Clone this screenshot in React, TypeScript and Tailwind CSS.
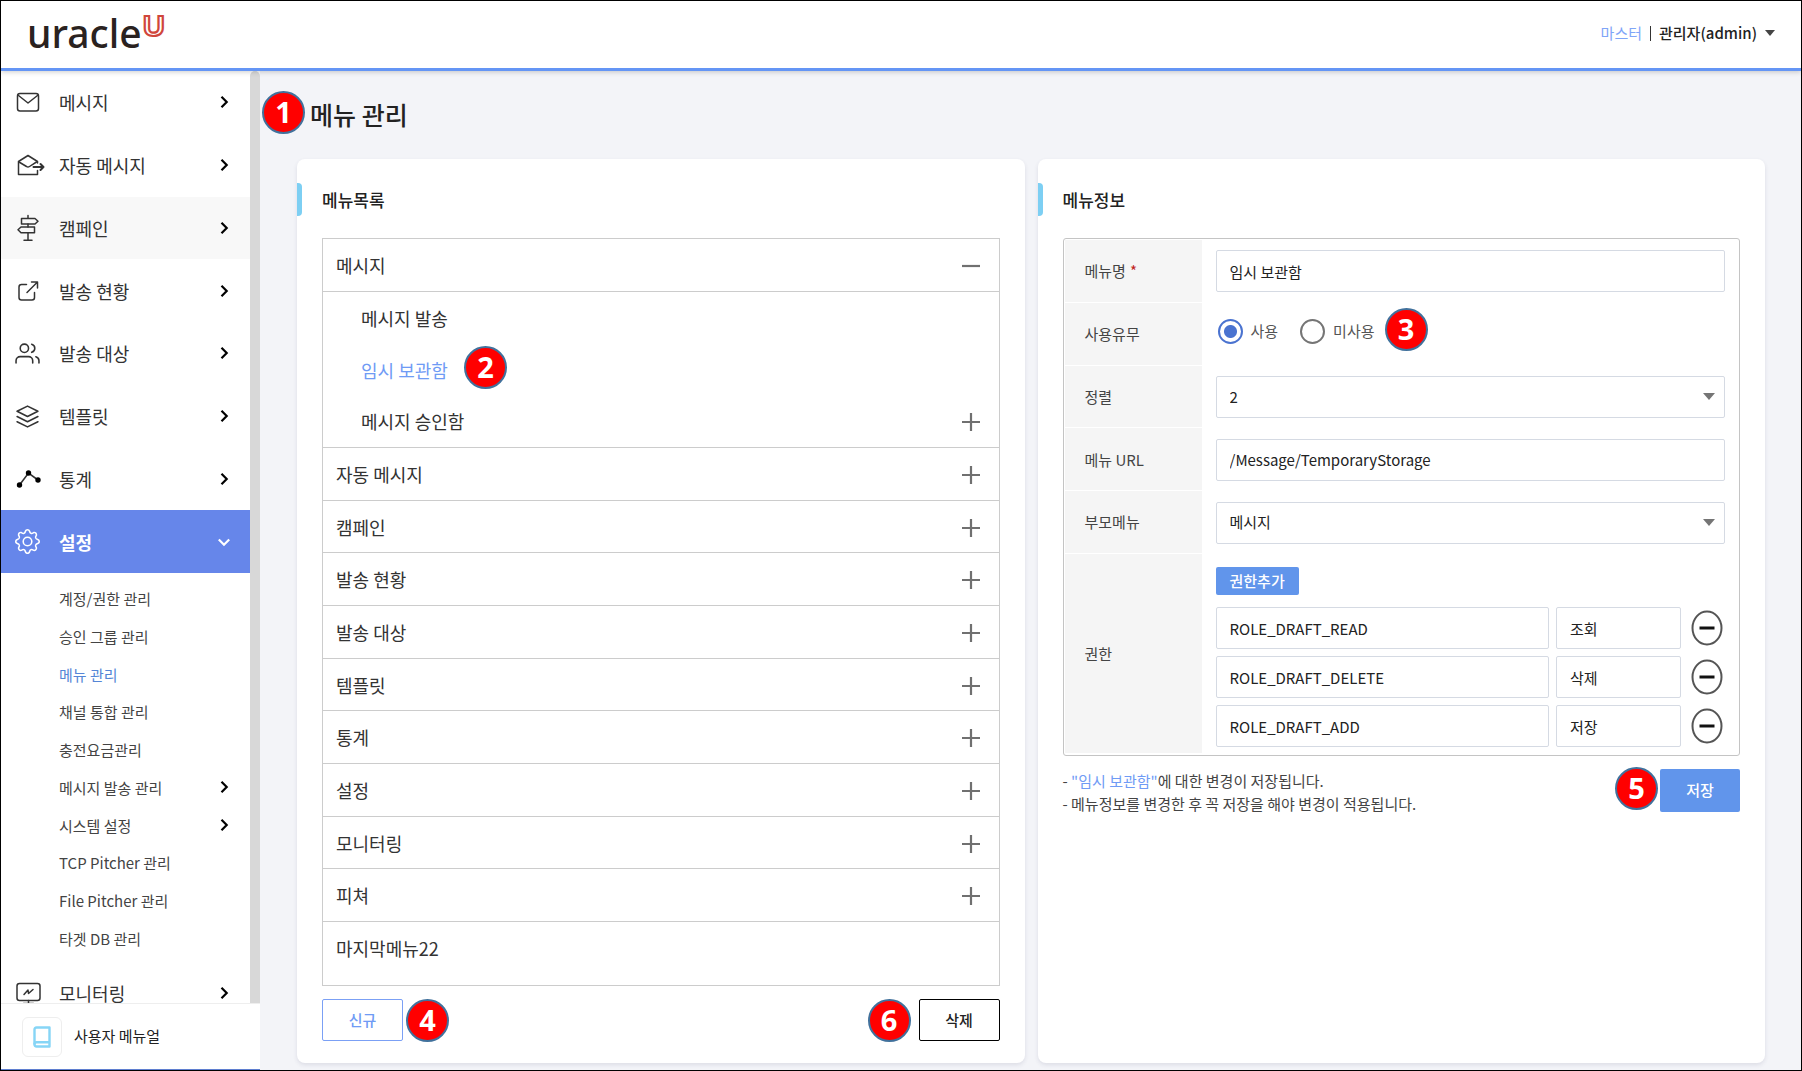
import { useState } from "react";
import type { ReactNode } from "react";
import { BsGear } from "react-icons/bs";
import { FiLayers, FiUsers } from "react-icons/fi";

interface NavItem {
  label: string;
  icon: ReactNode;
  hovered?: boolean;
}

interface SubItem {
  label: string;
  expandable?: boolean;
}

interface Role {
  name: string;
  label: string;
}

const stroke = {
  fill: "none",
  stroke: "currentColor",
  strokeWidth: 1.5,
  strokeLinecap: "round",
  strokeLinejoin: "round",
} as const;

const MailIcon = () => (
  <svg width="26" height="26" viewBox="0 0 26 26" {...stroke}>
    <rect x="2.500" y="4.500" width="21" height="17.500" rx="2.500" />
    <path d="M3.500 6.500 L13 14 L22.500 6.500" />
  </svg>
);

const AutoMailIcon = () => (
  <svg width="30" height="26" viewBox="0 0 30 26" {...stroke}>
    <path d="M22.500 11 V9.500 L13 3.500 L3.500 9.500 V22.500 H22.500 V18.500" />
    <path d="M4 10 L11.500 14.500 Q13 15.500 14.500 14.500 L21.500 10" />
    <path d="M18.500 15 H28.500 M25.500 12 L28.500 15 L25.500 18" strokeWidth="2" />
  </svg>
);

const SignpostIcon = () => (
  <svg width="26" height="28" viewBox="0 0 26 28" {...stroke}>
    <path d="M13 1.500 V4 M13 10 V13 M13 19 V26 M9 26.200 H17" />
    <path d="M6.500 4.500 H20 L23 7.200 L20 10 H6.500 Z" />
    <path d="M19.500 13 H6 L3 15.800 L6 18.800 H19.500 Z" />
  </svg>
);

const ShareIcon = () => (
  <svg width="26" height="26" viewBox="0 0 26 26" {...stroke}>
    <path d="M11.500 6.500 H6.500 Q4 6.500 4 9 V19.500 Q4 22 6.500 22 H17 Q19.500 22 19.500 19.500 V14.500" />
    <path d="M12 14.500 L22.500 4 M16.500 4 H22.500 V10" />
  </svg>
);

const ChartIcon = () => (
  <svg width="26" height="24" viewBox="0 0 26 24">
    <path
      d="M4.500 18 L13.500 6 L23 13"
      fill="none"
      stroke="#333"
      strokeWidth="1.6"
    />
    <circle cx="4.500" cy="18" r="2.700" />
    <circle cx="13.500" cy="6" r="2.700" />
    <circle cx="23" cy="13" r="2.700" />
  </svg>
);

const MonitorIcon = () => (
  <svg width="26" height="26" viewBox="0 0 26 26" {...stroke}>
    <rect x="2" y="3.500" width="23" height="17" rx="2.500" />
    <path d="M9 14.500 L13 10 L13.500 13.500 L18 9.500" />
    <path d="M13.500 20.500 V23 M8.500 23.500 H18.500" />
  </svg>
);

const BookIcon = () => (
  <svg
    width="18"
    height="22"
    viewBox="0 0 18 22"
    fill="none"
    stroke="#86d5f6"
    strokeWidth="2.400"
    strokeLinejoin="round"
  >
    <path d="M3.500 1.500 H16.500 V20.500 H3.500 Q1.500 20.500 1.500 18.500 V3.500 Q1.500 1.500 3.500 1.500 Z" />
    <path d="M1.500 18.500 Q1.500 16.200 3.500 16.200 H16.500" />
  </svg>
);

const Chevron = ({ open }: { open?: boolean }) => (
  <svg
    width="12"
    height="14"
    viewBox="0 0 12 14"
    fill="none"
    stroke="currentColor"
    strokeWidth="2.200"
    className={open ? "rotate-90" : ""}
  >
    <path d="M3.500 1.800 L8.700 7 L3.500 12.200" />
  </svg>
);

const Caret = () => (
  <svg width="12" height="7" viewBox="0 0 12 7" className="fill-[#757575]">
    <path d="M0 0 H12 L6 7 Z" />
  </svg>
);

const topItems: NavItem[] = [
  { label: "메시지", icon: <MailIcon /> },
  { label: "자동 메시지", icon: <AutoMailIcon /> },
  { label: "캠페인", icon: <SignpostIcon />, hovered: true },
  { label: "발송 현황", icon: <ShareIcon /> },
  { label: "발송 대상", icon: <FiUsers size={25} strokeWidth={1.5} /> },
  { label: "템플릿", icon: <FiLayers size={25} strokeWidth={1.5} /> },
  { label: "통계", icon: <ChartIcon /> },
];

const subItems: SubItem[] = [
  { label: "계정/권한 관리" },
  { label: "승인 그룹 관리" },
  { label: "메뉴 관리" },
  { label: "채널 통합 관리" },
  { label: "충전요금관리" },
  { label: "메시지 발송 관리", expandable: true },
  { label: "시스템 설정", expandable: true },
  { label: "TCP Pitcher 관리" },
  { label: "File Pitcher 관리" },
  { label: "타겟 DB 관리" },
];

const childMenus = ["메시지 발송", "임시 보관함", "메시지 승인함"];

const otherMenus = [
  "자동 메시지",
  "캠페인",
  "발송 현황",
  "발송 대상",
  "템플릿",
  "통계",
  "설정",
  "모니터링",
  "피쳐",
];

const initialRoles: Role[] = [
  { name: "ROLE_DRAFT_READ", label: "조회" },
  { name: "ROLE_DRAFT_DELETE", label: "삭제" },
  { name: "ROLE_DRAFT_ADD", label: "저장" },
];

const inputClass =
  "h-[42px] rounded-xs border border-[#d5dae3] bg-white px-[13px] text-[15px] text-[#222] outline-none";

// Numbered marker, placed by its parent
function Badge({ n, className }: { n: number; className: string }) {
  return (
    <span
      className={`absolute z-10 flex size-[43px] items-center justify-center rounded-full border-2 border-[#41719c] bg-[#ff0000] pb-[2px] font-['Open_Sans',sans-serif] text-[29px] leading-none font-bold text-white ${className}`}
    >
      {n}
    </span>
  );
}

function NavButton({
  item,
  active,
  className = "",
}: {
  item: NavItem;
  active?: boolean;
  className?: string;
}) {
  const tone = active
    ? "bg-[#6686ea] font-bold text-white"
    : item.hovered
      ? "bg-[#f8f8f8] text-[#333]"
      : "text-[#333]";
  return (
    <button
      className={`flex w-full items-center pr-5 pl-[14px] text-left text-lg leading-none ${tone} ${className}`}
    >
      <span className="flex w-[44px] shrink-0 items-center">{item.icon}</span>
      <span className="flex-1">{item.label}</span>
      <span className={active ? "text-white" : "text-black"}>
        <Chevron open={active} />
      </span>
    </button>
  );
}

function ToggleIcon({ open }: { open?: boolean }) {
  return (
    <svg width="18" height="20" viewBox="0 0 18 20" stroke="#707070" strokeWidth="2.200">
      <path d={open ? "M0 11 H18" : "M0 11 H18 M9 2 V20"} />
    </svg>
  );
}

function MenuRow({ label, open }: { label: string; open?: boolean }) {
  return (
    <button className="flex w-full flex-1 items-center justify-between border-b border-[#ccc] pr-[19px] pl-[13px] text-left text-lg leading-none text-[#333]">
      {label}
      <ToggleIcon open={open} />
    </button>
  );
}

function Card({ title, children }: { title: string; children: ReactNode }) {
  return (
    <section className="flex min-w-0 flex-1 flex-col rounded-lg bg-white pt-6 shadow-[0_2px_4px_rgba(60,60,100,0.12)]">
      <div className="flex h-[33px] items-center">
        <span className="h-full w-[5px] rounded-r-[4px] bg-[#7dcff3]" />
        <h2 className="pl-[20px] text-[17px] font-medium text-[#222]">{title}</h2>
      </div>
      <div className="flex flex-1 flex-col px-[25px] pt-[22px]">{children}</div>
    </section>
  );
}

function FormRow({
  label,
  htmlFor,
  required,
  children,
}: {
  label: string;
  htmlFor?: string;
  required?: boolean;
  children: ReactNode;
}) {
  return (
    <div className="flex flex-1">
      <label
        htmlFor={htmlFor}
        className="flex w-[137px] shrink-0 items-center border-b border-white bg-[#f5f5f5] pt-px pl-[20px] text-[15px] text-[#444]"
      >
        {label}
        {required && <span className="pl-1 text-[#c0241c]">*</span>}
      </label>
      <div className="flex flex-1 items-center pr-[13px] pl-[14px]">{children}</div>
    </div>
  );
}

function SelectBox({ id, options }: { id: string; options: string[] }) {
  return (
    <div className="relative w-full">
      <select id={id} className={`${inputClass} w-full appearance-none`}>
        {options.map((option) => (
          <option key={option}>{option}</option>
        ))}
      </select>
      <span className="pointer-events-none absolute inset-y-0 right-[10px] flex items-center">
        <Caret />
      </span>
    </div>
  );
}

function Radio({
  label,
  checked,
  onChange,
}: {
  label: string;
  checked: boolean;
  onChange: () => void;
}) {
  return (
    <label className="flex items-center gap-2 text-[15px] text-[#555]">
      <input
        type="radio"
        name="used"
        checked={checked}
        onChange={onChange}
        className="size-[25px] appearance-none rounded-full border-2 border-[#757575] checked:border-[#4a73d0] checked:bg-[radial-gradient(circle,#4a73d0_6px,transparent_7px)]"
      />
      {label}
    </label>
  );
}

function Sidebar() {
  return (
    <aside className="flex w-[259px] shrink-0 flex-col bg-white">
      <div className="flex min-h-0 flex-1">
        <nav className="min-w-0 flex-1 overflow-hidden">
          <div className="grid h-[502px] auto-rows-fr">
            {topItems.map((item) => (
              <NavButton key={item.label} item={item} />
            ))}
            <NavButton item={{ label: "설정", icon: <BsGear size={25} /> }} active />
          </div>
          <div className="grid h-[390px] auto-rows-fr pt-[7px] pb-[6px]">
            {subItems.map((sub) => (
              <a
                key={sub.label}
                href="#"
                className={`flex items-center justify-between pr-5 pl-[58px] text-[15px] leading-none ${
                  sub.label === "메뉴 관리" ? "text-[#5586d6]" : "text-[#444]"
                }`}
              >
                {sub.label}
                {sub.expandable && (
                  <span className="text-black">
                    <Chevron />
                  </span>
                )}
              </a>
            ))}
          </div>
          <NavButton
            item={{ label: "모니터링", icon: <MonitorIcon /> }}
            className="h-[60px]"
          />
        </nav>
        <div className="w-[10px] rounded-t-[5px] bg-[#d8d8d8]" />
      </div>
      <a
        href="#"
        className="flex h-[67px] shrink-0 items-center gap-3 border-t border-b border-t-[#eee] border-b-[#5f7fd0] pl-[21px] text-[15px] text-[#222]"
      >
        <span className="flex size-[40px] items-center justify-center rounded-md border border-[#eee]">
          <BookIcon />
        </span>
        사용자 메뉴얼
      </a>
    </aside>
  );
}

function MenuList() {
  const [selected, setSelected] = useState("임시 보관함");

  return (
    <Card title="메뉴목록">
      <div className="flex h-[748px] flex-col border border-[#ccc]">
        <div className="flex h-[53px]">
          <MenuRow label="메시지" open />
        </div>
        <div className="flex h-[156px] flex-col border-b border-[#ccc]">
          {childMenus.map((menu) => (
            <button
              key={menu}
              onClick={() => setSelected(menu)}
              className={`flex flex-1 items-center justify-between pr-[19px] pl-[38px] text-left text-lg leading-none ${
                menu === selected ? "text-[#6f9bf5]" : "text-[#333]"
              }`}
            >
              <span className="relative">
                {menu}
                {menu === "임시 보관함" && (
                  <Badge n={2} className="-top-[15px] left-[103px]" />
                )}
              </span>
              {menu === "메시지 승인함" && <ToggleIcon />}
            </button>
          ))}
        </div>
        <div className="flex h-[474px] flex-col">
          {otherMenus.map((menu) => (
            <MenuRow key={menu} label={menu} />
          ))}
        </div>
        <button className="flex h-[52px] items-center pl-[13px] text-left text-lg leading-none text-[#333]">
          마지막메뉴22
        </button>
      </div>
      <div className="mt-[13px] flex justify-between">
        <div className="relative">
          <button className="h-[42px] w-[81px] rounded-xs border border-[#7ba0f5] text-[15px] font-medium text-[#6f9bf5]">
            신규
          </button>
          <Badge n={4} className="top-0 left-[84px]" />
        </div>
        <div className="relative">
          <button className="h-[42px] w-[81px] rounded-xs border border-black text-[15px] font-medium text-[#222]">
            삭제
          </button>
          <Badge n={6} className="top-0 right-[89px]" />
        </div>
      </div>
    </Card>
  );
}

function MenuInfo() {
  const [used, setUsed] = useState(true);
  const [roles, setRoles] = useState<Role[]>(initialRoles);

  // Remove one role row
  const removeRole = (name: string) => {
    setRoles(roles.filter((role) => role.name !== name));
  };

  return (
    <Card title="메뉴정보">
      <div className="rounded-[3px] border border-[#c4c4c4] p-px">
        <div className="flex h-[314px] flex-col">
          <FormRow label="메뉴명" htmlFor="menu-name" required>
            <input
              id="menu-name"
              defaultValue="임시 보관함"
              className={`${inputClass} w-full`}
            />
          </FormRow>
          <FormRow label="사용유무">
            <div className="relative flex gap-[22px] pb-[6px] pl-[2px]">
              <Radio label="사용" checked={used} onChange={() => setUsed(true)} />
              <Radio label="미사용" checked={!used} onChange={() => setUsed(false)} />
              <Badge n={3} className="-top-[11px] left-[169px]" />
            </div>
          </FormRow>
          <FormRow label="정렬" htmlFor="menu-order">
            <SelectBox id="menu-order" options={["2", "1", "3"]} />
          </FormRow>
          <FormRow label="메뉴 URL" htmlFor="menu-url">
            <input
              id="menu-url"
              defaultValue="/Message/TemporaryStorage"
              className={`${inputClass} w-full`}
            />
          </FormRow>
          <FormRow label="부모메뉴" htmlFor="menu-parent">
            <SelectBox id="menu-parent" options={["메시지", ...otherMenus]} />
          </FormRow>
        </div>
        <FormRow label="권한">
          <div className="flex w-full flex-col gap-[7px] pt-[13px] pb-[7px]">
            <div className="pb-[5px]">
              <button className="flex h-[28px] items-center rounded-xs bg-[#6195eb] px-[14px] text-[15px] font-medium text-white">
                권한추가
              </button>
            </div>
            {roles.map((role) => (
              <div key={role.name} className="flex items-center gap-[7px]">
                <input
                  aria-label="권한명"
                  defaultValue={role.name}
                  className={`${inputClass} min-w-0 flex-1`}
                />
                <input
                  aria-label="권한 구분"
                  defaultValue={role.label}
                  className={`${inputClass} w-[125px]`}
                />
                <button
                  aria-label="권한 제거"
                  onClick={() => removeRole(role.name)}
                  className="flex w-[37px] justify-center"
                >
                  <svg width="32" height="36" viewBox="0 0 32 36" fill="none">
                    <ellipse cx="16" cy="18" rx="14.500" ry="16.500" stroke="#555" strokeWidth="2" />
                    <path d="M8.500 18 H23.500" stroke="#111" strokeWidth="3" />
                  </svg>
                </button>
              </div>
            ))}
          </div>
        </FormRow>
      </div>
      <div className="flex items-start justify-between pt-[13px]">
        <p className="text-[15px] leading-[23px] text-[#444]">
          - <span className="text-[#6f9bf5]">"임시 보관함"</span>에 대한 변경이
          저장됩니다.
          <br />- 메뉴정보를 변경한 후 꼭 저장을 해야 변경이 적용됩니다.
        </p>
        <div className="relative">
          <button className="h-[43px] w-[80px] rounded-xs bg-[#6195eb] text-[15px] font-medium text-white">
            저장
          </button>
          <Badge n={5} className="-top-[2px] right-[82px]" />
        </div>
      </div>
    </Card>
  );
}

export default function App() {
  return (
    <div className="flex h-screen min-h-[1071px] flex-col border border-black bg-[#f3f4f8] font-['Noto_Sans_CJK_KR',sans-serif]">
      {/* Header */}
      <header className="z-20 flex h-[70px] shrink-0 justify-between border-b-[3px] border-[#6495f5] bg-white pr-[26px] pl-[25px] shadow-[0_1px_5px_rgba(0,0,0,0.2)]">
        <svg width="145" height="60" viewBox="0 0 145 60" role="img" aria-label="uracle">
          <text
            x="1"
            y="47"
            fontFamily="Noto Sans, sans-serif"
            fontSize="39"
            fontWeight="500"
            fill="#2a2220"
          >
            uracle
          </text>
          <text
            x="117"
            y="35"
            fontFamily="Liberation Sans, sans-serif"
            fontSize="30"
            fontWeight="700"
            fill="#fff"
            stroke="#d0463c"
            strokeWidth="2.2"
          >
            U
          </text>
        </svg>
        <button className="flex h-[64px] items-center text-[15px] font-medium text-[#222]">
          <span className="font-normal text-[#7fa5f8]">마스터</span>
          <span className="mx-[8px] h-[15px] w-px bg-[#333]" />
          관리자(admin)
          <span className="pl-[8px]">
            <svg width="10" height="6" viewBox="0 0 10 6" className="fill-[#444]">
              <path d="M0 0 H10 L5 6 Z" />
            </svg>
          </span>
        </button>
      </header>

      <div className="flex min-h-0 flex-1">
        <Sidebar />
        <main className="flex min-w-0 flex-1 flex-col pr-[36px] pb-[7px] pl-[37px]">
          <div className="relative flex h-[88px] items-center pl-[13px]">
            <Badge n={1} className="top-[20px] -left-[35px]" />
            <h1 className="text-[25px] font-medium text-[#222]">메뉴 관리</h1>
          </div>
          <div className="flex flex-1 gap-[13px]">
            <MenuList />
            <MenuInfo />
          </div>
        </main>
      </div>
    </div>
  );
}
